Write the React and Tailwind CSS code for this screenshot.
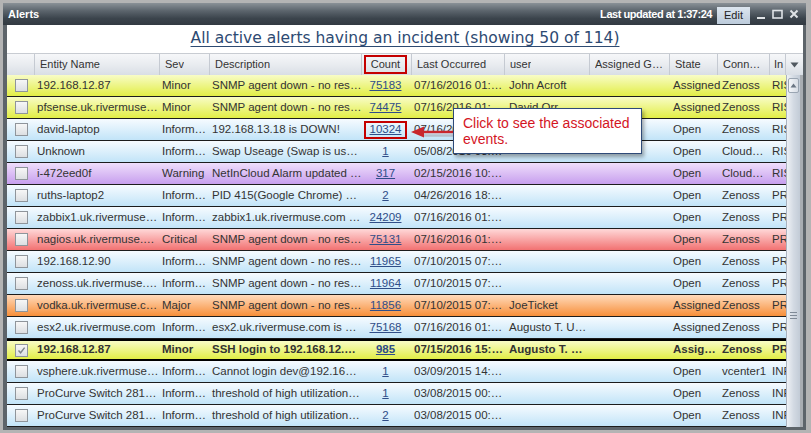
import React from 'react';

const rowBg = {
  yellow: 'bg-[linear-gradient(to_bottom,#f8fcc6,#e2ee46)]',
  blue: 'bg-[linear-gradient(to_bottom,#f6fbff,#c2e4f8)]',
  purple: 'bg-[linear-gradient(to_bottom,#efdefb,#c79fee)]',
  red: 'bg-[linear-gradient(to_bottom,#ffd8d8,#f27272)]',
  orange: 'bg-[linear-gradient(to_bottom,#ffdabb,#f78f3a)]',
};

const alerts = [
  { c: 'yellow', entity: '192.168.12.87', sev: 'Minor', desc: 'SNMP agent down - no response from 192.168.12.87', count: '75183', last: '07/16/2016 01:36:02', user: 'John Acroft', state: 'Assigned', conn: 'Zenoss', inc: 'RISK' },
  { c: 'yellow', entity: 'pfsense.uk.rivermuse.com', sev: 'Minor', desc: 'SNMP agent down - no response from pfsense', count: '74475', last: '07/16/2016 01:35:40', user: 'David Orr', state: 'Assigned', conn: 'Zenoss', inc: 'RISK' },
  { c: 'blue', entity: 'david-laptop', sev: 'Informational', desc: '192.168.13.18 is DOWN!', count: '10324', last: '07/16/2016 01:22:10', user: '', state: 'Open', conn: 'Zenoss', inc: 'RISK', mark: true },
  { c: 'blue', entity: 'Unknown', sev: 'Informational', desc: 'Swap Useage (Swap is used more than 80%)', count: '1', last: '05/08/2016 03:12:55', user: '', state: 'Open', conn: 'CloudWatch', inc: 'RISK' },
  { c: 'purple', entity: 'i-472eed0f', sev: 'Warning', desc: 'NetInCloud Alarm updated for instance', count: '317', last: '02/15/2016 10:4…', user: '', state: 'Open', conn: 'CloudWatch', inc: 'RISK' },
  { c: 'blue', entity: 'ruths-laptop2', sev: 'Informational', desc: 'PID 415(Google Chrome) Crashed', count: '2', last: '04/26/2016 18:20:31', user: '', state: 'Open', conn: 'Zenoss', inc: 'PROD' },
  { c: 'blue', entity: 'zabbix1.uk.rivermuse.com', sev: 'Informational', desc: 'zabbix1.uk.rivermuse.com is unreachable', count: '24209', last: '07/16/2016 01:36:20', user: '', state: 'Open', conn: 'Zenoss', inc: 'PROD' },
  { c: 'red', entity: 'nagios.uk.rivermuse.com', sev: 'Critical', desc: 'SNMP agent down - no response from nagios', count: '75131', last: '07/16/2016 01:36:11', user: '', state: 'Open', conn: 'Zenoss', inc: 'PROD' },
  { c: 'blue', entity: '192.168.12.90', sev: 'Informational', desc: 'SNMP agent down - no response from 192.168.12.90', count: '11965', last: '07/10/2015 07:44:02', user: '', state: 'Open', conn: 'Zenoss', inc: 'PROD' },
  { c: 'blue', entity: 'zenoss.uk.rivermuse.com', sev: 'Informational', desc: 'SNMP agent down - no response from zenoss', count: '11964', last: '07/10/2015 07:43:58', user: '', state: 'Open', conn: 'Zenoss', inc: 'PROD' },
  { c: 'orange', entity: 'vodka.uk.rivermuse.com', sev: 'Major', desc: 'SNMP agent down - no response from vodka', count: '11856', last: '07/10/2015 07:41:30', user: 'JoeTicket', state: 'Assigned', conn: 'Zenoss', inc: 'PROD' },
  { c: 'blue', entity: 'esx2.uk.rivermuse.com', sev: 'Informational', desc: 'esx2.uk.rivermuse.com is DOWN', count: '75168', last: '07/16/2016 01:36:08', user: 'Augusto T. Ueda', state: 'Assigned', conn: 'Zenoss', inc: 'PROD' },
  { c: 'yellow', entity: '192.168.12.87', sev: 'Minor', desc: 'SSH login to 192.168.12.87 failed', count: '985', last: '07/15/2016 15:02:44', user: 'Augusto T. Ueda', state: 'Assigned', conn: 'Zenoss', inc: 'PROD', selected: true },
  { c: 'blue', entity: 'vsphere.uk.rivermuse.com', sev: 'Informational', desc: 'Cannot login dev@192.168.12.40', count: '1', last: '03/09/2015 14:10:09', user: '', state: 'Open', conn: 'vcenter1', inc: 'INFRA' },
  { c: 'blue', entity: 'ProCurve Switch 2810-24G', sev: 'Informational', desc: 'threshold of high utilization exceeded', count: '1', last: '03/08/2015 00:12:40', user: '', state: 'Open', conn: 'Zenoss', inc: 'INFRA' },
  { c: 'blue', entity: 'ProCurve Switch 2810-48G', sev: 'Informational', desc: 'threshold of high utilization exceeded', count: '2', last: '03/08/2015 00:12:38', user: '', state: 'Open', conn: 'Zenoss', inc: 'INFRA' },
];

const headers = [
  { label: 'Entity Name', w: 'w-[125px]' },
  { label: 'Sev', w: 'w-[50px]' },
  { label: 'Description', w: 'w-[152px]' },
];

const headers2 = [
  { label: 'Last Occurred', w: 'w-[93px]' },
  { label: 'user', w: 'w-[85px]' },
  { label: 'Assigned Group', w: 'w-[80px]' },
  { label: 'State', w: 'w-[48px]' },
  { label: 'Connector', w: 'w-[52px]' },
];

const Checkbox = ({ checked }) => (
  <div className="mx-auto w-[13px] h-[13px] border border-[#8f959b] bg-[linear-gradient(to_bottom,#f7f7f7,#dcdfe2)] flex items-center justify-center">
    {checked && (
      <svg width="9" height="9" viewBox="0 0 9 9">
        <path d="M1.5 4.5 L3.6 6.8 L7.6 1.6" fill="none" stroke="#7d848b" strokeWidth="1.4" />
      </svg>
    )}
  </div>
);

const HeaderCell = ({ label, w }) => (
  <div className={`${w} shrink-0 h-full flex items-center px-[5px] border-r border-[#c5cad2] truncate`}>
    <span className="truncate">{label}</span>
  </div>
);

const AlertRow = ({ a }) => (
  <div
    className={`h-[22px] flex items-center text-[11.5px] text-[#333] ${rowBg[a.c]} ${
      a.selected ? 'border-y-2 border-black font-bold' : 'border-b border-[#1c1c1c]'
    }`}
  >
    <div className="w-[28px] shrink-0">
      <Checkbox checked={a.selected} />
    </div>
    <div className="w-[125px] shrink-0 pl-[2px] truncate">{a.entity}</div>
    <div className="w-[50px] shrink-0 pl-[2px] truncate">{a.sev}</div>
    <div className="w-[152px] shrink-0 pl-[2px] truncate">{a.desc}</div>
    <div className="w-[50px] shrink-0 pl-[2px]">
      <div
        className={`w-[43px] h-[18px] flex items-center justify-center underline text-[#2f4d88] ${
          a.mark ? 'border-2 border-[#c40000]' : ''
        }`}
      >
        {a.count}
      </div>
    </div>
    <div className="w-[93px] shrink-0 pl-[2px] truncate">{a.last}</div>
    <div className="w-[85px] shrink-0 pl-[4px] truncate">{a.user}</div>
    <div className="w-[80px] shrink-0" />
    <div className={`w-[50px] shrink-0 pl-[3px] whitespace-nowrap ${a.selected ? 'truncate pr-[2px]' : ''}`}>
      {a.state}
    </div>
    <div className="w-[50px] shrink-0 pl-[2px] truncate">{a.conn}</div>
    <div className="w-[16px] shrink-0 pl-[2px] overflow-hidden whitespace-nowrap">{a.inc}</div>
  </div>
);

export default function App() {
  return (
    <div className="w-[811px] h-[433px] bg-[#b4b4b4] pt-[3px] pl-[3px] pr-[5px] pb-[3px] font-['Liberation_Sans',Arial,sans-serif]">
      <div className="h-full flex flex-col bg-[#5d646a] pl-[4px] pr-[3px] pb-[3px]">
        {/* title bar */}
        <div className="h-[22px] -ml-[4px] -mr-[3px] pl-[5px] pr-[7px] flex items-center bg-[linear-gradient(to_bottom,#8a9197,#5c656d_35%,#3b444c_70%,#323a42)] text-white text-[11px] font-bold">
          <span>Alerts</span>
          <div className="ml-auto flex items-center h-full">
            <span className="tracking-[-0.45px]">Last updated at 1:37:24</span>
            <div className="ml-[5px] h-[17px] mt-[2px] px-[7px] flex items-center bg-[linear-gradient(to_bottom,#dde6ef,#bccbdb)] text-[#222] font-normal">
              Edit
            </div>
            <div className="ml-[6px] flex items-center gap-[6px]">
              <svg width="10" height="12" viewBox="0 0 10 12">
                <rect x="1" y="9" width="8" height="2" fill="#dfe3e6" />
              </svg>
              <svg width="11" height="12" viewBox="0 0 11 12">
                <rect x="1" y="2.5" width="9" height="7.5" fill="none" stroke="#dfe3e6" strokeWidth="1.6" />
              </svg>
              <svg width="10" height="12" viewBox="0 0 10 12">
                <path d="M1.5 2.5 L8.5 9.5 M8.5 2.5 L1.5 9.5" stroke="#dfe3e6" strokeWidth="2" />
              </svg>
            </div>
          </div>
        </div>

        {/* body */}
        <div className="flex-1 bg-white flex flex-col relative overflow-hidden">
          <div className="h-[28px] flex items-center justify-center">
            <span className="font-['DejaVu_Sans',Verdana,sans-serif] text-[15.5px] text-[#2d4a72] underline underline-offset-[3px] decoration-1">
              All active alerts having an incident (showing 50 of 114)
            </span>
          </div>

          {/* column header */}
          <div className="h-[22px] flex items-center text-[11px] text-[#333] bg-[linear-gradient(to_bottom,#f6f7f9,#e9ecf0_50%,#d9dee5)] border-t border-[#c8ccd2]">
            <div className="w-[28px] shrink-0 h-full border-r border-[#c5cad2]" />
            {headers.map((h) => (
              <HeaderCell key={h.label} {...h} />
            ))}
            <div className="w-[50px] shrink-0 h-full flex items-center pl-[2px] border-r border-[#c5cad2]">
              <div className="w-[43px] h-[19px] border-2 border-[#c40000] flex items-center justify-center">Count</div>
            </div>
            {headers2.map((h) => (
              <HeaderCell key={h.label} {...h} />
            ))}
            <div className="w-[16px] shrink-0 h-full flex items-center pl-[4px] border-r border-[#c5cad2] overflow-hidden whitespace-nowrap">
              In
            </div>
            <div className="flex-1 h-full flex items-center justify-center">
              <svg width="9" height="6" viewBox="0 0 9 6">
                <path d="M0.5 0.5 H8.5 L4.5 5.5 Z" fill="#505860" />
              </svg>
            </div>
          </div>

          {/* rows + scrollbar */}
          <div className="flex-1 flex min-h-0">
            <div className="w-[779px] shrink-0">
              {alerts.map((a, i) => (
                <AlertRow key={i} a={a} />
              ))}
            </div>
            <div className="w-[14px] shrink-0 flex flex-col bg-[linear-gradient(to_right,#eef1f5,#d3dae3_50%,#c2cbd6)] border-l border-[#aab3bf]">
              <div className="mt-[3px] h-[15px] mx-[1px] border border-[#9aa5b2] rounded-[2px] bg-[linear-gradient(to_right,#f4f6f9,#d7dde5)] flex items-center justify-center">
                <svg width="7" height="5" viewBox="0 0 7 5">
                  <path d="M0.5 4.5 H6.5 L3.5 0.5 Z" fill="#6b7684" />
                </svg>
              </div>
              <div className="mt-[219px] flex flex-col items-center gap-[2px]">
                <div className="w-[7px] h-px bg-[#7f8a97]" />
                <div className="w-[7px] h-px bg-[#7f8a97]" />
                <div className="w-[7px] h-px bg-[#7f8a97]" />
              </div>
            </div>
            <div className="flex-1 bg-[#a9adb2]" />
          </div>

          {/* callout */}
          <svg className="absolute left-[403px] top-[100px]" width="48" height="16" viewBox="0 0 48 16">
            <path d="M12 8.5 H48" stroke="#8a7a7a" strokeWidth="2.5" opacity="0.35" transform="translate(1,2)" />
            <path d="M12 7 H48" stroke="#c8272d" strokeWidth="2.5" />
            <path d="M1 7 L14 1.5 L14 12.5 Z" fill="#c8272d" />
          </svg>
          <div className="absolute left-[446px] top-[83px] w-[189px] h-[46px] bg-white border border-[#2e4a78] shadow-[2px_3px_4px_rgba(0,0,0,0.35)] px-[9px] pt-[6px] text-[14px] leading-[16px] text-[#d4151f]">
            Click to see the associated events.
          </div>
        </div>
      </div>
    </div>
  );
}
